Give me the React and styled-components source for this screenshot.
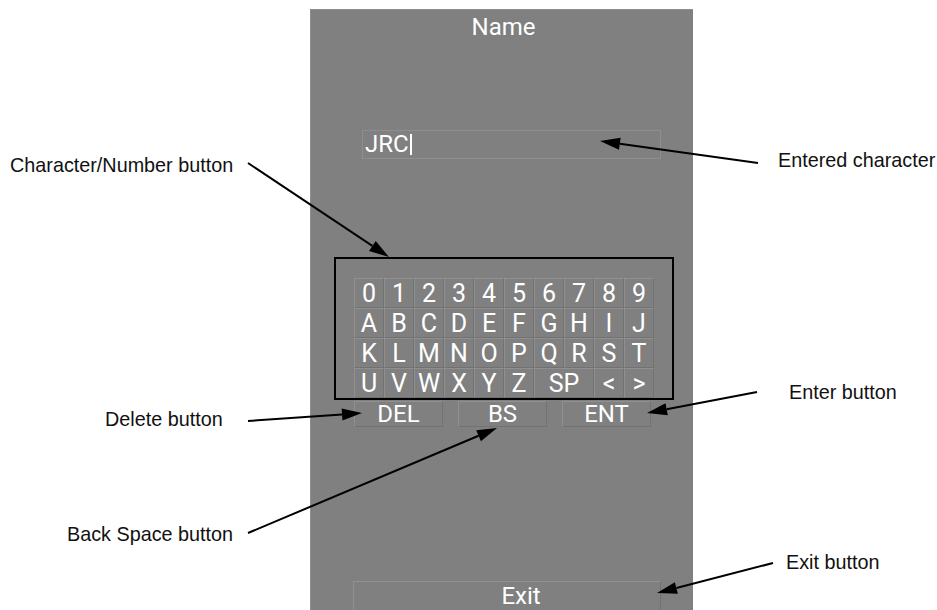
import React from "react";
import styled, { createGlobalStyle } from "styled-components";

const GlobalStyle = createGlobalStyle`
  body {
    margin: 0;
    background: #fff;
  }
`;

const rows = [
  ["0", "1", "2", "3", "4", "5", "6", "7", "8", "9"],
  ["A", "B", "C", "D", "E", "F", "G", "H", "I", "J"],
  ["K", "L", "M", "N", "O", "P", "Q", "R", "S", "T"],
  ["U", "V", "W", "X", "Y", "Z", "SP", "<", ">"],
];

const callouts = [
  { text: "Character/Number button", x: 10, y: 155, from: [248, 163], to: [389, 257] },
  { text: "Entered character", x: 778, y: 150, from: [758, 163], to: [600, 141] },
  { text: "Enter button", x: 789, y: 382, from: [757, 392], to: [647, 413] },
  { text: "Delete button", x: 105, y: 409, from: [248, 421], to: [362, 413] },
  { text: "Back Space button", x: 67, y: 524, from: [248, 533], to: [497, 428] },
  { text: "Exit button", x: 786, y: 552, from: [773, 563], to: [657, 593] },
];

const Arrow = ({ from, to }) => {
  const [x1, y1] = from;
  const [x2, y2] = to;
  const len = Math.hypot(x2 - x1, y2 - y1);
  const ux = (x2 - x1) / len;
  const uy = (y2 - y1) / len;
  const bx = x2 - ux * 20;
  const by = y2 - uy * 20;
  const px = -uy * 6;
  const py = ux * 6;
  return (
    <g>
      <line x1={x1} y1={y1} x2={bx} y2={by} stroke="#000" strokeWidth="2" />
      <polygon
        points={`${x2},${y2} ${bx + px},${by + py} ${bx - px},${by - py}`}
        fill="#000"
      />
    </g>
  );
};

const App = () => {
  return (
    <>
      <GlobalStyle />
      <Figure>
        <Panel>
          <Title>Name</Title>
          <Entry>
            JRC<Caret />
          </Entry>
          <Keyboard>
            {rows.flat().map((k) => (
              <Key key={k} $wide={k === "SP"}>
                {k}
              </Key>
            ))}
          </Keyboard>
          <ActionRow>
            <ActionButton>DEL</ActionButton>
            <ActionButton>BS</ActionButton>
            <ActionButton>ENT</ActionButton>
          </ActionRow>
          <ExitButton>Exit</ExitButton>
        </Panel>

        {/* annotation layer */}
        <Overlay viewBox="0 0 937 610" width="937" height="610">
          <rect x="335" y="258" width="338" height="141" fill="none" stroke="#000" strokeWidth="2" />
          {callouts.map((c) => (
            <Arrow key={c.text} from={c.from} to={c.to} />
          ))}
        </Overlay>
        {callouts.map((c) => (
          <Label key={c.text} $x={c.x} $y={c.y}>
            {c.text}
          </Label>
        ))}
      </Figure>
    </>
  );
};

const Figure = styled.div`
  position: relative;
  width: 937px;
  height: 610px;
  overflow: hidden;
  box-sizing: border-box;
  padding: 9px 0 0 310px;
  background: #fff;
`;

const Panel = styled.div`
  width: 383px;
  height: 640px;
  box-sizing: border-box;
  background: #808080;
  border-top: 1px solid #8e8e8e;
  border-left: 1px solid #8e8e8e;
  display: flex;
  flex-direction: column;
  align-items: flex-start;
  font-family: Roboto, "DejaVu Sans", sans-serif;
  color: #fff;
`;

const Title = styled.div`
  align-self: stretch;
  margin-top: 5px;
  padding-left: 3px;
  text-align: center;
  font-size: 24px;
  line-height: 24px;
`;

const Entry = styled.div`
  margin: 91px 0 0 51px;
  width: 299px;
  height: 29px;
  box-sizing: border-box;
  border: 1px solid #8e8e8e;
  padding-left: 2px;
  display: flex;
  align-items: center;
  font-size: 24px;
  line-height: 27px;
`;

const Caret = styled.span`
  display: inline-block;
  width: 2px;
  height: 21px;
  margin-left: 1px;
  background: #fff;
`;

const Keyboard = styled.div`
  margin: 119px 0 0 43px;
  display: grid;
  grid-template-columns: repeat(10, 30px);
  grid-auto-rows: 30px;
`;

const Key = styled.div`
  grid-column: span ${({ $wide }) => ($wide ? 2 : 1)};
  box-sizing: border-box;
  border-style: solid;
  border-width: 1px;
  border-color: #909090 #727272 #727272 #909090;
  display: flex;
  justify-content: center;
  padding-top: 2px;
  font-size: 25px;
  line-height: 26px;
`;

const ActionRow = styled.div`
  margin: 3px 0 0 43px;
  display: flex;
  gap: 15px;
`;

const ActionButton = styled.div`
  width: 89px;
  height: 26px;
  box-sizing: border-box;
  border-style: solid;
  border-width: 1px;
  border-color: #909090 #727272 #727272 #909090;
  text-align: center;
  font-size: 24px;
  line-height: 24px;
`;

const ExitButton = styled.div`
  margin: 154px 0 0 42px;
  width: 308px;
  height: 30px;
  box-sizing: border-box;
  border-style: solid;
  border-width: 1px;
  border-color: #909090 #727272 #727272 #909090;
  padding-left: 28px;
  text-align: center;
  font-size: 24px;
  line-height: 28px;
`;

const Overlay = styled.svg`
  position: absolute;
  left: 0;
  top: 0;
  pointer-events: none;
`;

const Label = styled.div`
  position: absolute;
  left: ${({ $x }) => $x}px;
  top: ${({ $y }) => $y}px;
  white-space: nowrap;
  font-family: "Liberation Sans", Arial, sans-serif;
  font-size: 19.8px;
  line-height: 20px;
  color: #111;
`;

export default App;
